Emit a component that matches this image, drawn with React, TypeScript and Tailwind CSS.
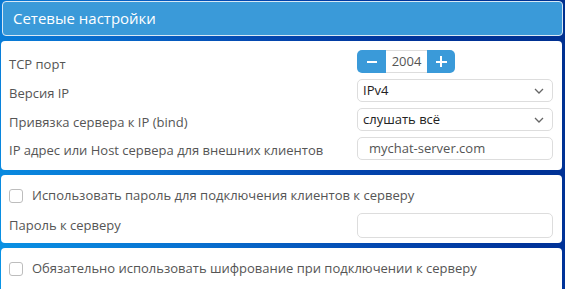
import React from "react";

const Chevron = () => (
  <svg width="10" height="6" viewBox="0 0 10 6" className="shrink-0">
    <path d="M1 1 L5 5 L9 1" fill="none" stroke="#666" strokeWidth="1.3" />
  </svg>
);

const Checkbox = () => (
  <span className="w-[14px] h-[14px] rounded-[3px] border border-[#bdbdbd] bg-white shrink-0" />
);

export default function App() {
  return (
    <div
      className="w-[565px] h-[289px] overflow-hidden bg-[linear-gradient(60deg,#0a95e6_0%,#0870d0_30%,#0448b0_55%,#00339a_75%,#00308f_100%)] text-[#555] text-[13px]"
      style={{ fontFamily: '"Open Sans", "Noto Sans", sans-serif' }}
    >
      <div className="pt-[1px] px-[2px]">
        <div className="h-[35px] rounded-[4px] border border-[#d8e8f5] bg-[#3a9ad9] flex items-center pl-[10px] text-white text-[15px]">
          Сетевые настройки
        </div>
      </div>
      <div className="px-[1px] pr-[3px] mt-[5px] flex flex-col gap-[5px]">
        <div className="h-[129px] bg-white rounded-[4px] pl-[8px] pr-[9px] pt-[9px] flex flex-col gap-[6px]">
          <div className="flex items-center justify-between h-[23px]">
            <span className="pt-[6px]">TCP порт</span>
            <div className="w-[196px] flex">
              <div className="flex h-[23px]">
                <div className="w-[29px] bg-[#3a9ad9] rounded-l-[5px] flex items-center justify-center">
                  <span className="w-[10px] h-[2px] bg-white" />
                </div>
                <div className="w-[41px] border-y border-[#ddd] flex items-center justify-center text-[#555]">2004</div>
                <div className="w-[28px] bg-[#3a9ad9] rounded-r-[5px] flex items-center justify-center relative">
                  <span className="w-[11px] h-[2px] bg-white" />
                  <span className="absolute w-[2px] h-[11px] bg-white" />
                </div>
              </div>
            </div>
          </div>
          <div className="flex items-center justify-between h-[23px]">
            <span className="pt-[6px]">Версия IP</span>
            <div className="w-[196px] h-[23px] rounded-[5px] border border-[#ddd] flex items-center justify-between pl-[5px] pr-[8px] text-[#222]">
              <span>IPv4</span>
              <Chevron />
            </div>
          </div>
          <div className="flex items-center justify-between h-[23px]">
            <span className="pt-[6px]">Привязка сервера к IP (bind)</span>
            <div className="w-[196px] h-[23px] rounded-[5px] border border-[#ddd] flex items-center justify-between pl-[5px] pr-[8px] text-[#222]">
              <span>слушать всё</span>
              <Chevron />
            </div>
          </div>
          <div className="flex items-center justify-between h-[23px]">
            <span className="pt-[5px]">IP адрес или Host сервера для внешних клиентов</span>
            <div className="w-[196px] h-[23px] rounded-[5px] border border-[#ddd] flex items-center pl-[11px] text-[#555]">
              mychat-server.com
            </div>
          </div>
        </div>
        <div className="h-[68px] bg-white rounded-[4px] pl-[8px] pr-[9px] pt-[11px] flex flex-col gap-[7px]">
          <div className="flex items-center gap-[9px] h-[20px]">
            <Checkbox />
            <span>Использовать пароль для подключения клиентов к серверу</span>
          </div>
          <div className="flex items-center justify-between h-[25px]">
            <span>Пароль к серверу</span>
            <div className="w-[196px] h-[25px] rounded-[5px] border border-[#ddd]" />
          </div>
        </div>
        <div className="h-[50px] bg-white rounded-[4px] pl-[8px] pr-[9px] pt-[11px]">
          <div className="flex items-center gap-[9px] h-[20px]">
            <Checkbox />
            <span>Обязательно использовать шифрование при подключении к серверу</span>
          </div>
        </div>
      </div>
    </div>
  );
}
